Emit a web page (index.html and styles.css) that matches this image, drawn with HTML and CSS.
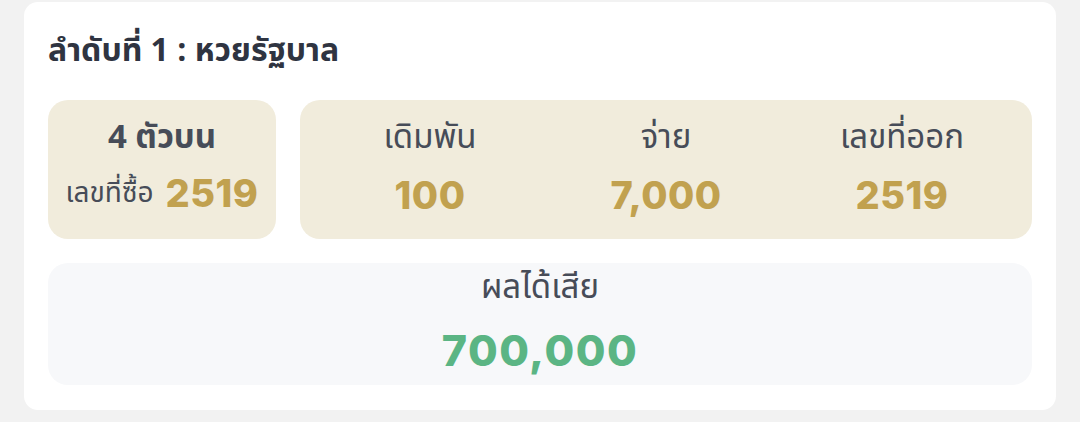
FILE: index.html
```html
<!DOCTYPE html>
<html lang="th">
<head>
    <meta charset="UTF-8">
    <link rel="stylesheet" href="styles.css">
    <title>ลำดับที่ 1 : หวยรัฐบาล</title>
</head>
<body>
<div class="bet_card">
    <h2 class="bet_title">ลำดับที่ 1 : หวยรัฐบาล</h2>

    <div class="bet_row">
        <div class="bet_box bet_type">
            <div class="bet_type__name">4 ตัวบน</div>
            <div class="bet_type__buy">
                <span class="bet_label_sm">เลขที่ซื้อ</span>
                <span class="bet_value">2519</span>
            </div>
        </div>

        <div class="bet_box bet_stats">
            <div class="bet_stat">
                <div class="bet_label">เดิมพัน</div>
                <div class="bet_value">100</div>
            </div>
            <div class="bet_stat">
                <div class="bet_label">จ่าย</div>
                <div class="bet_value">7,000</div>
            </div>
            <div class="bet_stat">
                <div class="bet_label">เลขที่ออก</div>
                <div class="bet_value">2519</div>
            </div>
        </div>
    </div>

    <!-- ผลได้เสีย -->
    <div class="bet_result">
        <div class="bet_label">ผลได้เสีย</div>
        <div class="bet_result__value">700,000</div>
    </div>
</div>
</body>
</html>
```

FILE: styles.css
```css
body, html {
    margin: 0;
    padding: 0;
    background-color: #f2f2f2;
    font-family: "Noto Sans Thai", "Noto Sans", "DejaVu Sans", sans-serif;
    color: #474c58;
}

body {
    padding: 2px 24px 0;
}

/* Карточка ставки */

.bet_card {
    background-color: #fff;
    border-radius: 14px;
    padding: 24px 24px 25px;
}

.bet_title {
    margin: 0 0 24px;
    font-size: 32px;
    line-height: 50px;
    font-weight: 700;
    color: #2f3441;
}

.bet_row {
    display: flex;
    gap: 24px;
}

.bet_box {
    background-color: #f1ecdc;
    border-radius: 20px;
    height: 139px;
    box-sizing: border-box;
    padding-top: 18px;
}

.bet_type {
    width: 228px;
    display: flex;
    flex-direction: column;
    align-items: center;
    gap: 15px;
}

.bet_type__name {
    font-size: 33px;
    font-weight: 700;
    line-height: 40px;
}

.bet_type__buy {
    display: flex;
    align-items: center;
    gap: 12px;
    height: 40px;
}

.bet_label_sm {
    font-size: 28px;
}

.bet_stats {
    flex: 1;
    display: grid;
    grid-template-columns: repeat(3, 1fr);
    padding-left: 12px;
    padding-right: 12px;
}

.bet_stat {
    display: flex;
    flex-direction: column;
    align-items: center;
    gap: 17px;
}

.bet_label {
    font-size: 33px;
    line-height: 40px;
}

.bet_value {
    font-family: Inter, "Noto Sans", sans-serif;
    font-size: 38px;
    line-height: 40px;
    font-weight: 800;
    letter-spacing: 0.5px;
    color: #c1a14f;
}

/* Итог */

.bet_result {
    margin-top: 24px;
    background-color: #f7f8fa;
    border-radius: 20px;
    height: 122px;
    box-sizing: border-box;
    padding-top: 5px;
    display: flex;
    flex-direction: column;
    align-items: center;
    gap: 19px;
}

.bet_result__value {
    font-family: Inter, "Noto Sans", sans-serif;
    font-size: 43px;
    line-height: 46px;
    font-weight: 800;
    letter-spacing: 1.5px;
    color: #5bb584;
}
```
